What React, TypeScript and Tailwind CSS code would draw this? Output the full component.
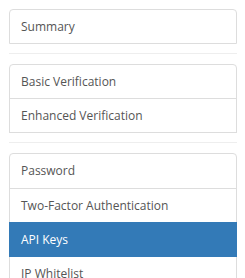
import React from "react";

type Item = { label: string; active?: boolean };

const groups: Item[][] = [
  [{ label: "Summary" }],
  [{ label: "Basic Verification" }, { label: "Enhanced Verification" }],
  [
    { label: "Password" },
    { label: "Two-Factor Authentication" },
    { label: "API Keys", active: true },
    { label: "IP Whitelist" },
  ],
];

function Group({ items }: { items: Item[] }) {
  return (
    <div className="flex flex-col">
      {items.map((it, i) => (
        <div
          key={it.label}
          className={
            (it.active
              ? "relative z-[2] bg-[#337ab7] border-[#337ab7] text-white "
              : "bg-white border-[#ddd] text-[#555] ") +
            "border px-[11px] py-[8px] leading-[17.14px] " +
            (i > 0 ? "-mt-px " : "") +
            (i === 0 ? "rounded-t-[4px]" : "")
          }
        >
          {it.label}
        </div>
      ))}
    </div>
  );
}

export default function App() {
  return (
    <div
      className="w-[245px] h-[278px] overflow-hidden bg-white pt-[9px] pl-[9px] pr-[8px] text-[12px]"
      style={{ fontFamily: '"Open Sans", sans-serif' }}
    >
      <Group items={groups[0]} />
      <div className="mt-[9px] mb-[10px] h-px bg-[#eee]" />
      <Group items={groups[1]} />
      <div className="mt-[9px] mb-[10px] h-px bg-[#eee]" />
      <Group items={groups[2]} />
    </div>
  );
}
